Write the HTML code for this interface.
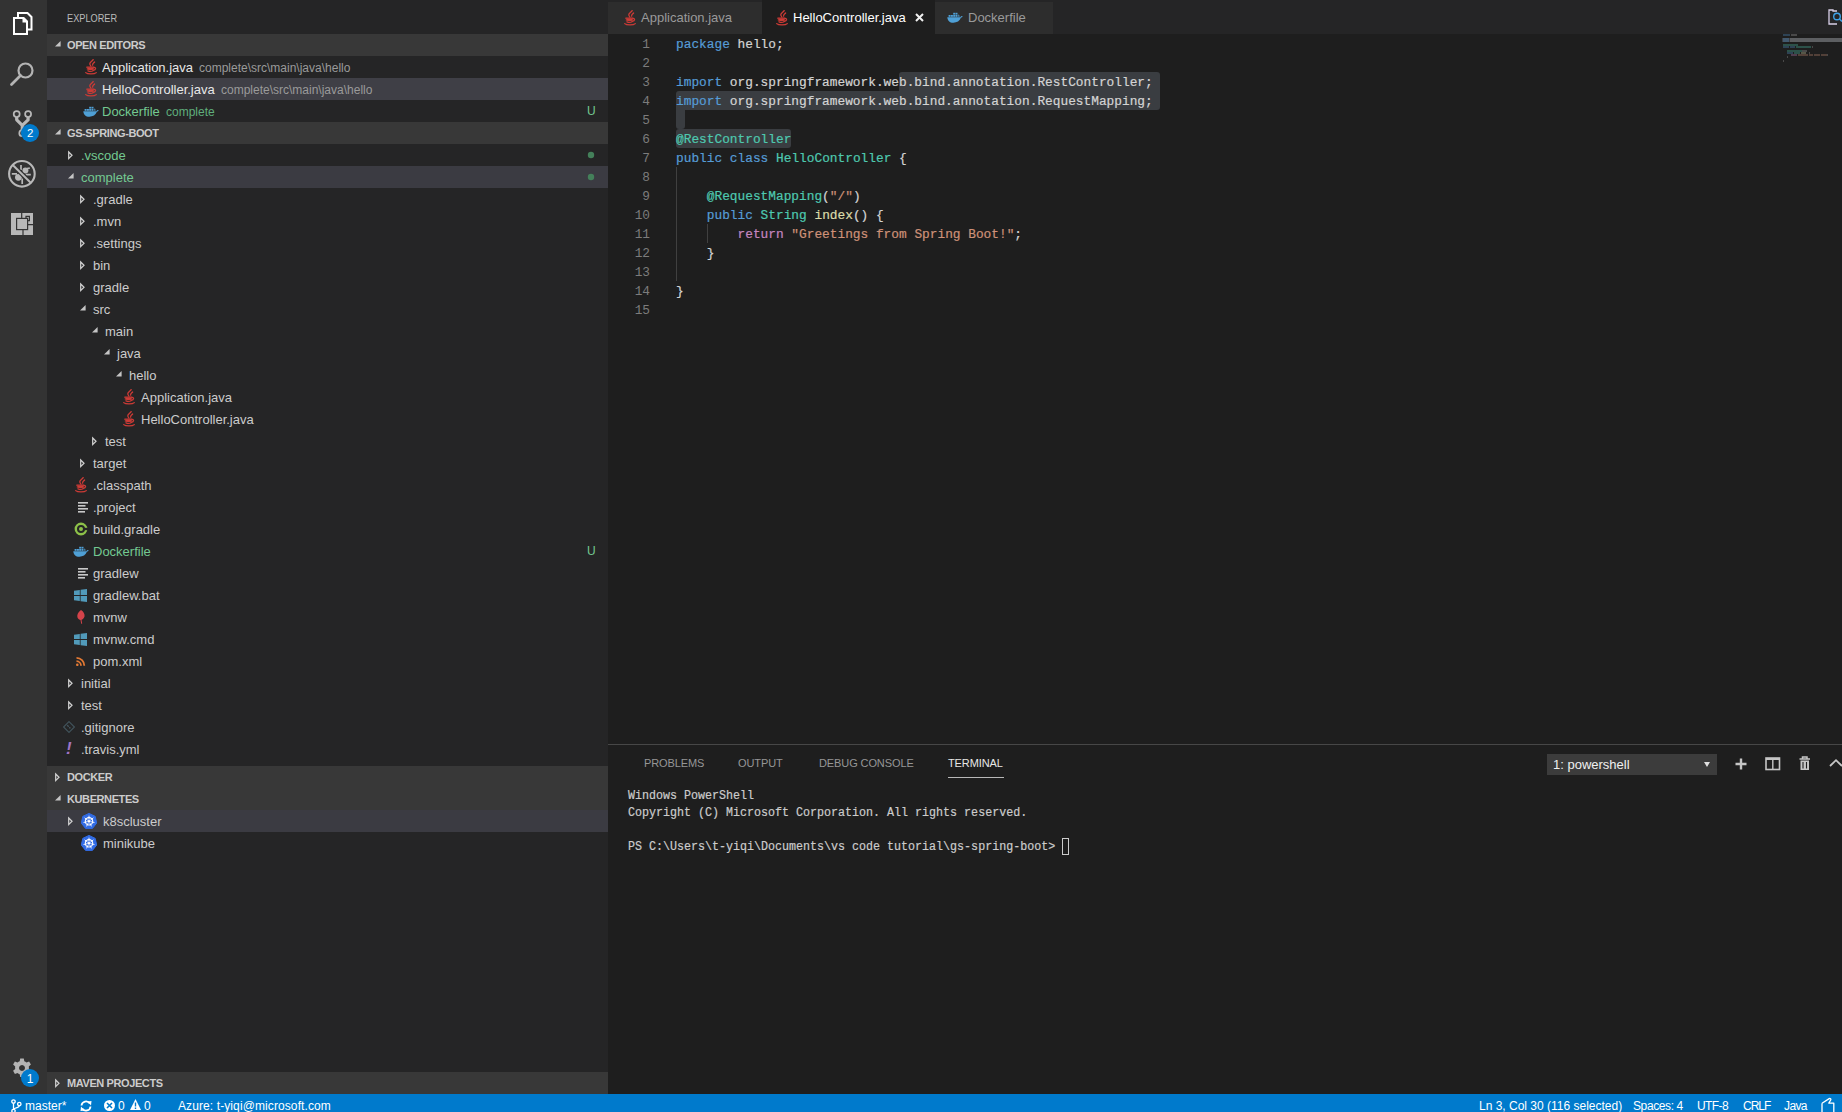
<!DOCTYPE html>
<html><head><meta charset="utf-8">
<style>
*{box-sizing:border-box;margin:0;padding:0}
html,body{width:1842px;height:1112px;overflow:hidden;background:#1e1e1e;font-family:"Liberation Sans",sans-serif;font-size:13px;color:#cccccc}
.a{position:absolute}
svg.a{overflow:visible}
#act{position:absolute;left:0;top:0;width:47px;height:1094px;background:#333333}
#side{position:absolute;left:47px;top:0;width:561px;height:1094px;background:#252526}
#tabs{position:absolute;left:608px;top:0;width:1234px;height:34px;background:#252526}
#editor{position:absolute;left:608px;top:34px;width:1234px;height:710px;background:#1e1e1e}
#panel{position:absolute;left:608px;top:744px;width:1234px;height:350px;background:#1e1e1e;border-top:1px solid #474747}
#status{position:absolute;left:0;top:1094px;width:1842px;height:22px;background:#007acc;color:#fff;font-size:12px;line-height:22px;white-space:pre}
.r{position:absolute;left:0;width:561px;height:22px;line-height:23px;white-space:pre;color:#cccccc}
.r>span{position:absolute;top:0}
.r>svg{position:absolute}
.hdr{background:#383838;font-weight:bold;font-size:11px;color:#cccccc;letter-spacing:-0.4px}
.sel{background:#3f3f46}
.hov{background:#3b3b42}
.desc{color:#9a9a9a;font-size:12px;line-height:24px}
.g{color:#73c991}
.tw{position:absolute;width:0;height:0}
.twc{position:absolute;top:7px;width:6px;height:9px}
.twe{position:absolute;top:8px;width:6px;height:6px}
.code{position:absolute;left:0;top:0;-webkit-text-stroke:0.2px currentColor;font-family:"Liberation Mono",monospace;font-size:12.825px;line-height:19px;white-space:pre;color:#d4d4d4}
.ln{position:absolute;left:0;width:42px;text-align:right;font-family:"Liberation Mono",monospace;font-size:12.8px;line-height:19px;color:#7c7c7c;white-space:pre}
.k{color:#569cd6}.t{color:#4ec9b0}.s{color:#ce9178}.f{color:#dcdcaa}.c{color:#c586c0}
.term{position:absolute;left:20px;-webkit-text-stroke:0.2px currentColor;transform:scaleX(0.93352);transform-origin:0 0;font-family:"Liberation Mono",monospace;font-size:12.5px;line-height:17px;white-space:pre;color:#cccccc}
.ptab{position:absolute;top:0;height:35px;line-height:36px;font-size:11px;color:#969696;white-space:pre;letter-spacing:-0.1px}
.tab{position:absolute;top:2px;height:32px;line-height:32px;white-space:pre;color:#9a9a9a;background:#2d2d2d}
</style></head><body>
<svg width="0" height="0" style="position:absolute">
<defs>
<symbol id="java" viewBox="0 0 12 16"><g fill="none" stroke="#cc3b36" stroke-width="1.3" stroke-linecap="round"><path d="M8.2 0.6 C7.5 2.2 4.6 3 4.8 5 C4.9 6 5.6 6.5 5.9 7.2"/><path d="M9.6 3 C8.8 4 7.2 4.6 7.6 6.2"/><path d="M1.8 8.2 H8.8"/><path d="M2.3 10 C3.5 10.5 7.5 10.5 8.5 10"/><path d="M8.9 8.4 C11.2 8.2 11.2 11 8.3 11.4"/><path d="M3 11.8 C4.5 12.5 6.8 12.5 8 11.8"/><path d="M0.7 13.6 C2.5 15.4 9.5 15.4 11.3 13.6"/></g><path d="M2.2 8.4 H8.6 L8.2 10.2 C7 11 4 11 2.7 10.2 Z" fill="#cc3b36"/></symbol>
<symbol id="docker" viewBox="0 0 16 11"><g fill="#4fa0d6"><path d="M0.3 5.2 H13.3 C13.8 4.3 14.6 3.9 15.6 4.2 C15.4 5 14.8 5.5 14 5.6 C12.8 9 9.8 10.8 6.4 10.8 C2.6 10.8 0.6 8.6 0.3 5.2 Z"/><rect x="1.6" y="3" width="2" height="1.8"/><rect x="3.9" y="3" width="2" height="1.8"/><rect x="6.2" y="3" width="2" height="1.8"/><rect x="8.5" y="3" width="2" height="1.8"/><rect x="6.2" y="0.8" width="2" height="1.8"/><rect x="8.5" y="0.8" width="2" height="1.8"/><path d="M11.3 2.5 C12.3 2.8 12.6 3.8 12.5 4.8 L11.3 4.8 Z"/></g></symbol>
<symbol id="lines" viewBox="0 0 10 11"><g fill="#c8c8c8"><rect x="0" y="0" width="10" height="1.6"/><rect x="0" y="3" width="7.5" height="1.6"/><rect x="0" y="6" width="10" height="1.6"/><rect x="0" y="9" width="7" height="1.6"/></g></symbol>
<symbol id="gradle" viewBox="0 0 14 14"><circle cx="7" cy="7" r="5.2" fill="none" stroke="#8dc149" stroke-width="2.4"/><rect x="10" y="5.8" width="4" height="2.4" fill="#252526"/><circle cx="7" cy="7" r="2" fill="#8dc149"/></symbol>
<symbol id="win" viewBox="0 0 13 13"><g fill="#519aba"><path d="M0 1.8 L5.8 0.9 V6.1 H0 Z"/><path d="M6.6 0.8 L13 0 V6.1 H6.6 Z"/><path d="M0 6.9 H5.8 V12.1 L0 11.2 Z"/><path d="M6.6 6.9 H13 V13 L6.6 12.2 Z"/></g></symbol>
<symbol id="feather" viewBox="0 0 8 14"><path d="M4 0 C6.5 1.5 8 4 7.5 6.5 C7 8.5 5.5 9.5 4.5 9.8 L5.2 13.8 L4.2 13.8 L3.5 10 C1.5 9.5 0 8 0.3 5.5 C0.6 3 2.5 1 4 0 Z" fill="#d4434a"/></symbol>
<symbol id="rss" viewBox="0 0 10 9"><g fill="none" stroke="#e37933" stroke-width="1.8"><path d="M0.5 4.2 A4.5 4.5 0 0 1 5 8.7"/><path d="M0.5 0.9 A7.8 7.8 0 0 1 8.3 8.7"/></g><circle cx="1.3" cy="7.8" r="1.3" fill="#e37933"/></symbol>
<symbol id="gitig" viewBox="0 0 14 14"><path d="M7 0.7 L13.3 7 L7 13.3 L0.7 7 Z" fill="none" stroke="#41535b" stroke-width="1.3"/><circle cx="5.5" cy="5.5" r="1" fill="#41535b"/><circle cx="8" cy="8" r="1" fill="#41535b"/><path d="M5.5 5.5 L8 8" stroke="#41535b"/></symbol>
<symbol id="k8s" viewBox="0 0 16 16"><path d="M8.00 0.40 L14.18 3.37 L15.70 10.06 L11.43 15.42 L4.57 15.42 L0.30 10.06 L1.82 3.37 Z" fill="#326ce5" stroke="#326ce5" stroke-width="1" stroke-linejoin="round"/><g fill="none" stroke="#ffffff"><circle cx="8" cy="8.3" r="3.7" stroke-width="1.1"/><path d="M8.00 6.70 L8.00 2.70 M9.25 7.30 L12.38 4.81 M9.56 8.66 L13.46 9.55 M8.69 9.74 L10.43 13.35 M7.31 9.74 L5.57 13.35 M6.44 8.66 L2.54 9.55 M6.75 7.30 L3.62 4.81 " stroke-width="0.9"/></g><circle cx="8" cy="8.3" r="1.3" fill="#fff"/></symbol>
</defs></svg>
<div id="act">
<svg class="a" style="left:0;top:0" width="47" height="250">
 <g fill="none" stroke="#ffffff" stroke-width="2">
  <path d="M14 18 H23 L27 22 V34 H14 Z"/>
  <path d="M18 17 V13 H27.5 L31.5 17 V29.5 H28"/>
 </g>
 <path d="M22.5 17 H24 L28 21 V22.5 H22.5 Z" fill="#ffffff"/>
 <g fill="none" stroke="#b4b4b4">
  <circle cx="25.5" cy="70.5" r="7" stroke-width="2.2"/>
  <path d="M20.5 75.5 L11.5 84.5" stroke-width="2.8" stroke-linecap="round"/>
 </g>
 <g fill="none" stroke="#b8b8b8">
  <circle cx="16.7" cy="114.1" r="3" stroke-width="1.7"/>
  <circle cx="28.1" cy="114.1" r="3" stroke-width="1.7"/>
  <path d="M16.7 117 V119.8 L22.3 125.3 L28.1 119.8 V117 M22.3 125 V130.5" stroke-width="3.2" stroke-linejoin="round"/>
  <circle cx="22.3" cy="133.2" r="3" stroke-width="1.7"/>
 </g>
 <circle cx="30" cy="133" r="9" fill="#007acc"/>
 <text x="30.2" y="137" text-anchor="middle" font-family="Liberation Sans" font-size="11.5" fill="#fff">2</text>
 <circle cx="21.9" cy="173.8" r="12.8" fill="none" stroke="#b8b8b8" stroke-width="2.1"/>
 <g stroke="#b8b8b8" stroke-width="1.7" fill="none">
  <path d="M21 165 V170 M25.6 174.7 H30.8 M11.8 173.8 H17 M22.2 178.5 V184 M27 168.5 L29.8 168.2"/>
 </g>
 <g fill="#b8b8b8">
  <circle cx="25.4" cy="170.6" r="3"/>
  <circle cx="18.4" cy="177.3" r="3.4"/>
 </g>
 <path d="M14.6 166.9 L29.1 181.1" stroke="#333333" stroke-width="4.4"/>
 <path d="M12.5 164.8 L31.2 183.2" stroke="#b8b8b8" stroke-width="2"/>
 <path d="M11 213 H33 V235 H11 Z" fill="#b8b8b8"/>
 <g fill="none" stroke="#333333" stroke-width="1.2">
  <rect x="16.6" y="218.4" width="11" height="11.2"/>
  <path d="M21.7 213 V218 M23 229.8 V235 M27.8 224.6 H33"/>
  <path d="M26 218.2 V216.4 H29.4 V220.6 H28"/>
 </g>
</svg>
<svg class="a" style="left:0;top:1050px" width="47" height="44">
 <g transform="translate(22 18)" fill="#b4b4b4">
  <path d="M-1.8 -9.5 h3.6 l.5 2.7 a7 7 0 0 1 2.2 1.3 l2.6 -1 1.8 3.1 -2.1 1.8 a7 7 0 0 1 0 2.6 l2.1 1.8 -1.8 3.1 -2.6 -1 a7 7 0 0 1 -2.2 1.3 l-.5 2.7 h-3.6 l-.5 -2.7 a7 7 0 0 1 -2.2 -1.3 l-2.6 1 -1.8 -3.1 2.1 -1.8 a7 7 0 0 1 0 -2.6 l-2.1 -1.8 1.8 -3.1 2.6 1 a7 7 0 0 1 2.2 -1.3 z M0 -3 a3 3 0 1 0 0.01 0 z" fill-rule="evenodd"/>
 </g>
 <circle cx="30" cy="28" r="9" fill="#007acc"/>
 <text x="30" y="32.5" text-anchor="middle" font-family="Liberation Sans" font-size="12" fill="#fff">1</text>
</svg>
</div>
<div id="side">
<div class="a" style="left:20px;top:0;height:34px;line-height:36px;font-size:11px;color:#bbbbbb;white-space:pre;transform:scaleX(0.835);transform-origin:0 0">EXPLORER</div>
<div class="r hdr" style="top:34px"><svg class="a" style="left:8px;top:7px" width="6" height="6"><path d="M5.6 0 V5.6 H0 Z" fill="#c5c5c5"/></svg><span style="left:20px">OPEN EDITORS</span></div>
<div class="r" style="top:56px"><svg class="a" style="left:38.0px;top:3.0px" width="12" height="16"><use href="#java"/></svg><span style="left:55px;color:#e8e8e8">Application.java</span><span class="desc" style="left:152px">complete\src\main\java\hello</span></div>
<div class="r sel" style="top:78px"><svg class="a" style="left:38.0px;top:3.0px" width="12" height="16"><use href="#java"/></svg><span style="left:55px;color:#e8e8e8">HelloController.java</span><span class="desc" style="left:174px">complete\src\main\java\hello</span></div>
<div class="r" style="top:100px"><svg class="a" style="left:35.5px;top:5.5px" width="16" height="11"><use href="#docker"/></svg><span class="g" style="left:55px">Dockerfile</span><span class="desc g" style="left:119px;color:#5fae7c">complete</span><span class="g" style="left:540px;font-size:12px">U</span></div>
<div class="r hdr" style="top:122px"><svg class="a" style="left:8px;top:7px" width="6" height="6"><path d="M5.6 0 V5.6 H0 Z" fill="#c5c5c5"/></svg><span style="left:20px">GS-SPRING-BOOT</span></div>
<div class="r" style="top:144px"><svg class="a" style="left:21px;top:7px" width="5" height="9"><path d="M0.7 1 L4 4.3 L0.7 7.6 Z" fill="none" stroke="#d0d0d0" stroke-width="1.25" stroke-linejoin="miter"/></svg><span class="g" style="left:34px">.vscode</span><svg class="a" style="left:540px;top:7px" width="8" height="8"><circle cx="4" cy="4" r="3.2" fill="#44805a"/></svg></div>
<div class="r hov" style="top:166px"><svg class="a" style="left:21px;top:7px" width="6" height="6"><path d="M5.6 0 V5.6 H0 Z" fill="#c5c5c5"/></svg><span class="g" style="left:34px">complete</span><svg class="a" style="left:540px;top:7px" width="8" height="8"><circle cx="4" cy="4" r="3.2" fill="#44805a"/></svg></div>
<div class="r" style="top:188px"><svg class="a" style="left:33px;top:7px" width="5" height="9"><path d="M0.7 1 L4 4.3 L0.7 7.6 Z" fill="none" stroke="#d0d0d0" stroke-width="1.25" stroke-linejoin="miter"/></svg><span style="left:46px">.gradle</span></div>
<div class="r" style="top:210px"><svg class="a" style="left:33px;top:7px" width="5" height="9"><path d="M0.7 1 L4 4.3 L0.7 7.6 Z" fill="none" stroke="#d0d0d0" stroke-width="1.25" stroke-linejoin="miter"/></svg><span style="left:46px">.mvn</span></div>
<div class="r" style="top:232px"><svg class="a" style="left:33px;top:7px" width="5" height="9"><path d="M0.7 1 L4 4.3 L0.7 7.6 Z" fill="none" stroke="#d0d0d0" stroke-width="1.25" stroke-linejoin="miter"/></svg><span style="left:46px">.settings</span></div>
<div class="r" style="top:254px"><svg class="a" style="left:33px;top:7px" width="5" height="9"><path d="M0.7 1 L4 4.3 L0.7 7.6 Z" fill="none" stroke="#d0d0d0" stroke-width="1.25" stroke-linejoin="miter"/></svg><span style="left:46px">bin</span></div>
<div class="r" style="top:276px"><svg class="a" style="left:33px;top:7px" width="5" height="9"><path d="M0.7 1 L4 4.3 L0.7 7.6 Z" fill="none" stroke="#d0d0d0" stroke-width="1.25" stroke-linejoin="miter"/></svg><span style="left:46px">gradle</span></div>
<div class="r" style="top:298px"><svg class="a" style="left:33px;top:7px" width="6" height="6"><path d="M5.6 0 V5.6 H0 Z" fill="#c5c5c5"/></svg><span style="left:46px">src</span></div>
<div class="r" style="top:320px"><svg class="a" style="left:45px;top:7px" width="6" height="6"><path d="M5.6 0 V5.6 H0 Z" fill="#c5c5c5"/></svg><span style="left:58px">main</span></div>
<div class="r" style="top:342px"><svg class="a" style="left:57px;top:7px" width="6" height="6"><path d="M5.6 0 V5.6 H0 Z" fill="#c5c5c5"/></svg><span style="left:70px">java</span></div>
<div class="r" style="top:364px"><svg class="a" style="left:69px;top:7px" width="6" height="6"><path d="M5.6 0 V5.6 H0 Z" fill="#c5c5c5"/></svg><span style="left:82px">hello</span></div>
<div class="r" style="top:386px"><svg class="a" style="left:75.5px;top:3.0px" width="12" height="16"><use href="#java"/></svg><span style="left:94px">Application.java</span></div>
<div class="r" style="top:408px"><svg class="a" style="left:75.5px;top:3.0px" width="12" height="16"><use href="#java"/></svg><span style="left:94px">HelloController.java</span></div>
<div class="r" style="top:430px"><svg class="a" style="left:45px;top:7px" width="5" height="9"><path d="M0.7 1 L4 4.3 L0.7 7.6 Z" fill="none" stroke="#d0d0d0" stroke-width="1.25" stroke-linejoin="miter"/></svg><span style="left:58px">test</span></div>
<div class="r" style="top:452px"><svg class="a" style="left:33px;top:7px" width="5" height="9"><path d="M0.7 1 L4 4.3 L0.7 7.6 Z" fill="none" stroke="#d0d0d0" stroke-width="1.25" stroke-linejoin="miter"/></svg><span style="left:46px">target</span></div>
<div class="r" style="top:474px"><svg class="a" style="left:27.5px;top:3.0px" width="12" height="16"><use href="#java"/></svg><span style="left:46px">.classpath</span></div>
<div class="r" style="top:496px"><svg class="a" style="left:31.0px;top:5.5px" width="10" height="11"><use href="#lines"/></svg><span style="left:46px">.project</span></div>
<div class="r" style="top:518px"><svg class="a" style="left:26.5px;top:4.0px" width="14" height="14"><use href="#gradle"/></svg><span style="left:46px">build.gradle</span></div>
<div class="r" style="top:540px"><svg class="a" style="left:25.5px;top:5.5px" width="16" height="11"><use href="#docker"/></svg><span class="g" style="left:46px">Dockerfile</span><span class="g" style="left:540px;font-size:12px">U</span></div>
<div class="r" style="top:562px"><svg class="a" style="left:31.0px;top:5.5px" width="10" height="11"><use href="#lines"/></svg><span style="left:46px">gradlew</span></div>
<div class="r" style="top:584px"><svg class="a" style="left:27.0px;top:4.5px" width="13" height="13"><use href="#win"/></svg><span style="left:46px">gradlew.bat</span></div>
<div class="r" style="top:606px"><svg class="a" style="left:29.5px;top:4.0px" width="8" height="14"><use href="#feather"/></svg><span style="left:46px">mvnw</span></div>
<div class="r" style="top:628px"><svg class="a" style="left:27.0px;top:4.5px" width="13" height="13"><use href="#win"/></svg><span style="left:46px">mvnw.cmd</span></div>
<div class="r" style="top:650px"><svg class="a" style="left:28.5px;top:6.5px" width="10" height="9"><use href="#rss"/></svg><span style="left:46px">pom.xml</span></div>
<div class="r" style="top:672px"><svg class="a" style="left:21px;top:7px" width="5" height="9"><path d="M0.7 1 L4 4.3 L0.7 7.6 Z" fill="none" stroke="#d0d0d0" stroke-width="1.25" stroke-linejoin="miter"/></svg><span style="left:34px">initial</span></div>
<div class="r" style="top:694px"><svg class="a" style="left:21px;top:7px" width="5" height="9"><path d="M0.7 1 L4 4.3 L0.7 7.6 Z" fill="none" stroke="#d0d0d0" stroke-width="1.25" stroke-linejoin="miter"/></svg><span style="left:34px">test</span></div>
<div class="r" style="top:716px"><svg class="a" style="left:15.5px;top:5.0px" width="12" height="12"><use href="#gitig"/></svg><span style="left:34px">.gitignore</span></div>
<div class="r" style="top:738px"><span style="left:19px;color:#a074c4;font-weight:bold;font-style:italic;font-size:17px;line-height:22px;top:0">!</span><span style="left:34px">.travis.yml</span></div>
<div class="r hdr" style="top:766px"><svg class="a" style="left:8px;top:7px" width="5" height="9"><path d="M0.7 1 L4 4.3 L0.7 7.6 Z" fill="none" stroke="#d0d0d0" stroke-width="1.25" stroke-linejoin="miter"/></svg><span style="left:20px">DOCKER</span></div>
<div class="r hdr" style="top:788px"><svg class="a" style="left:8px;top:7px" width="6" height="6"><path d="M5.6 0 V5.6 H0 Z" fill="#c5c5c5"/></svg><span style="left:20px">KUBERNETES</span></div>
<div class="r hov" style="top:810px"><svg class="a" style="left:21px;top:7px" width="5" height="9"><path d="M0.7 1 L4 4.3 L0.7 7.6 Z" fill="none" stroke="#d0d0d0" stroke-width="1.25" stroke-linejoin="miter"/></svg><svg class="a" style="left:34.0px;top:3.0px" width="16" height="16"><use href="#k8s"/></svg><span style="left:56px">k8scluster</span></div>
<div class="r" style="top:832px"><svg class="a" style="left:34.0px;top:3.0px" width="16" height="16"><use href="#k8s"/></svg><span style="left:56px">minikube</span></div>
<div class="r hdr" style="top:1072px"><svg class="a" style="left:8px;top:7px" width="5" height="9"><path d="M0.7 1 L4 4.3 L0.7 7.6 Z" fill="none" stroke="#d0d0d0" stroke-width="1.25" stroke-linejoin="miter"/></svg><span style="left:20px">MAVEN PROJECTS</span></div>
</div>
<div id="tabs">
<div class="tab" style="left:0;width:154px"><svg class="a" style="left:16px;top:8px" width="12" height="16"><use href="#java"/></svg><span class="a" style="left:33px;top:0">Application.java</span></div>
<div class="tab" style="left:154px;width:173px;top:0;height:34px;background:#1e1e1e;color:#ffffff;line-height:35px"><svg class="a" style="left:14px;top:10px" width="12" height="16"><use href="#java"/></svg><span class="a" style="left:31px;top:0">HelloController.java</span><svg class="a" style="left:153px;top:13px" width="9" height="9"><path d="M1 1 L8 8 M8 1 L1 8" stroke="#f0f0f0" stroke-width="2"/></svg></div>
<div class="tab" style="left:327px;width:118px"><svg class="a" style="left:12px;top:10px" width="16" height="11"><use href="#docker"/></svg><span class="a" style="left:33px;top:0">Dockerfile</span></div>
<svg class="a" style="left:1220px;top:9px" width="14" height="16"><path d="M9 2 H5 V1 H1 V15 H9" fill="none" stroke="#d8cfe8" stroke-width="1.3"/><circle cx="9" cy="7.5" r="3.3" fill="none" stroke="#3ea1e6" stroke-width="1.4"/><path d="M11.3 9.8 L14 12.5" stroke="#3ea1e6" stroke-width="1.6"/></svg>
</div>
<div id="editor">
<div class="a" style="left:290.70000000000005px;top:38px;width:261.29999999999995px;height:19px;background:#3a3d41;border-radius:3px 3px 0 0"></div>
<div class="a" style="left:68px;top:57px;width:484px;height:19px;background:#3a3d41;border-radius:3px 0 3px 0"></div>
<div class="a" style="left:68px;top:76px;width:8.5px;height:19px;background:#3a3d41;border-radius:0 0 3px 3px"></div>
<div class="a" style="left:68px;top:95px;width:115px;height:19px;background:#3a3d41;border-radius:3px"></div>
<div class="a" style="left:68px;top:133px;width:1px;height:114px;background:#404040"></div>
<div class="a" style="left:99px;top:190px;width:1px;height:19px;background:#404040"></div>
<div class="ln" style="top:1px">1
2
3
4
5
6
7
8
9
10
11
12
13
14
15
</div>
<div class="code" style="left:68px;top:1px"><span class="k">package</span> hello;

<span class="k">import</span> org.springframework.web.bind.annotation.RestController;
<span class="k">import</span> org.springframework.web.bind.annotation.RequestMapping;

<span class="t">@RestController</span>
<span class="k">public</span> <span class="k">class</span> <span class="t">HelloController</span> {

    <span class="t">@RequestMapping</span>(<span class="s">"/"</span>)
    <span class="k">public</span> <span class="t">String</span> <span class="f">index</span>() {
        <span class="c">return</span> <span class="s">"Greetings from Spring Boot!"</span>;
    }

}
</div>
<div class="a" style="left:1174px;top:0;width:60px;height:40px;overflow:hidden">
<div class="a" style="left:0;top:4px;width:60px;height:4px;background:#3a3d41"></div>
<div class="a" style="left:1px;top:0px;width:7px;height:2px;background:#569cd6;opacity:.3"></div>
<div class="a" style="left:9px;top:0px;width:6px;height:2px;background:#b0b0b0;opacity:.3"></div>
<div class="a" style="left:1px;top:4px;width:6px;height:2px;background:#569cd6;opacity:.3"></div>
<div class="a" style="left:8px;top:4px;width:55px;height:2px;background:#b0b0b0;opacity:.3"></div>
<div class="a" style="left:1px;top:6px;width:6px;height:2px;background:#569cd6;opacity:.3"></div>
<div class="a" style="left:8px;top:6px;width:55px;height:2px;background:#b0b0b0;opacity:.3"></div>
<div class="a" style="left:1px;top:10px;width:15px;height:2px;background:#4ec9b0;opacity:.3"></div>
<div class="a" style="left:1px;top:12px;width:6px;height:2px;background:#569cd6;opacity:.3"></div>
<div class="a" style="left:8px;top:12px;width:5px;height:2px;background:#569cd6;opacity:.3"></div>
<div class="a" style="left:14px;top:12px;width:15px;height:2px;background:#4ec9b0;opacity:.3"></div>
<div class="a" style="left:30px;top:12px;width:1px;height:2px;background:#b0b0b0;opacity:.3"></div>
<div class="a" style="left:5px;top:16px;width:15px;height:2px;background:#4ec9b0;opacity:.3"></div>
<div class="a" style="left:20px;top:16px;width:5px;height:2px;background:#b0b0b0;opacity:.3"></div>
<div class="a" style="left:5px;top:18px;width:6px;height:2px;background:#569cd6;opacity:.3"></div>
<div class="a" style="left:12px;top:18px;width:6px;height:2px;background:#4ec9b0;opacity:.3"></div>
<div class="a" style="left:19px;top:18px;width:5px;height:2px;background:#dcdcaa;opacity:.3"></div>
<div class="a" style="left:27px;top:18px;width:1px;height:2px;background:#b0b0b0;opacity:.3"></div>
<div class="a" style="left:9px;top:20px;width:6px;height:2px;background:#c586c0;opacity:.3"></div>
<div class="a" style="left:16px;top:20px;width:10px;height:2px;background:#ce9178;opacity:.3"></div>
<div class="a" style="left:27px;top:20px;width:4px;height:2px;background:#ce9178;opacity:.3"></div>
<div class="a" style="left:32px;top:20px;width:6px;height:2px;background:#ce9178;opacity:.3"></div>
<div class="a" style="left:39px;top:20px;width:6px;height:2px;background:#ce9178;opacity:.3"></div>
<div class="a" style="left:45px;top:20px;width:1px;height:2px;background:#b0b0b0;opacity:.3"></div>
<div class="a" style="left:5px;top:22px;width:1px;height:2px;background:#b0b0b0;opacity:.3"></div>
<div class="a" style="left:1px;top:26px;width:1px;height:2px;background:#b0b0b0;opacity:.3"></div>
</div>

</div>
<div id="panel">
<div class="ptab" style="left:36px;color:#969696">PROBLEMS</div>
<div class="ptab" style="left:130px;color:#969696">OUTPUT</div>
<div class="ptab" style="left:211px;color:#969696">DEBUG CONSOLE</div>
<div class="ptab" style="left:340px;color:#e7e7e7">TERMINAL</div>
<div class="a" style="left:340px;top:32px;width:56px;height:1px;background:#b8b8b8"></div>
<div class="term" style="top:43px">Windows PowerShell
Copyright (C) Microsoft Corporation. All rights reserved.

PS C:\Users\t-yiqi\Documents\vs code tutorial\gs-spring-boot> </div>
<div class="a" style="left:454px;top:93px;width:7px;height:17px;border:1px solid #cccccc"></div>
<div class="a" style="left:939px;top:9px;width:170px;height:21px;background:#3c3c3c;color:#f0f0f0;font-size:13px;line-height:22px;white-space:pre"><span class="a" style="left:6px;top:0">1: powershell</span><svg class="a" style="left:157px;top:8px" width="6" height="5"><path d="M0 0 H6 L3 5 Z" fill="#e0e0e0"/></svg></div>
<svg class="a" style="left:1127px;top:13px" width="12" height="12"><path d="M6 0.5 V11.5 M0.5 6 H11.5" stroke="#c5c5c5" stroke-width="2.4"/></svg>
<svg class="a" style="left:1157px;top:12px" width="16" height="14"><rect x="1" y="1" width="13.5" height="11.5" fill="none" stroke="#c5c5c5" stroke-width="1.6"/><path d="M7.8 1 V12.5" stroke="#c5c5c5" stroke-width="1.4"/><path d="M1 2 H14.5" stroke="#c5c5c5" stroke-width="2"/></svg>
<svg class="a" style="left:1191px;top:11px" width="12" height="15"><path d="M0.5 3 H11 M3.5 3 V1 H8 V3" fill="none" stroke="#c5c5c5" stroke-width="1.5"/><path d="M1.5 4.5 H10 V14 H1.5 Z" fill="#c5c5c5"/><path d="M4 6 V12.5 M7.5 6 V12.5" stroke="#1e1e1e" stroke-width="1.1"/></svg>
<svg class="a" style="left:1221px;top:14px" width="14" height="8"><path d="M1 7 L7 1.2 L13 7" fill="none" stroke="#c5c5c5" stroke-width="1.8"/></svg>
</div>
<div id="status"><svg class="a" style="left:11px;top:5px" width="11" height="14"><g fill="none" stroke="#fff" stroke-width="1.3"><circle cx="2.5" cy="2.5" r="1.7"/><circle cx="8.3" cy="5" r="1.7"/><circle cx="2.5" cy="12" r="1.7"/><path d="M2.5 4.2 V10.3 M8.3 6.7 C8.3 9 3 8.5 2.5 10.3"/></g></svg><span class="a" style="left:25px;top:1px">master*</span><svg class="a" style="left:80px;top:6px" width="12" height="12"><g fill="none" stroke="#fff" stroke-width="1.8"><path d="M1.5 5.5 A4.5 4.5 0 0 1 9.8 3.5"/><path d="M10.5 6.5 A4.5 4.5 0 0 1 2.2 8.5"/></g><path d="M7.5 1.5 L11.5 1 L11 5.5 Z M4.5 10.5 L0.5 11 L1 6.5 Z" fill="#fff"/></svg><svg class="a" style="left:104px;top:6px" width="11" height="11"><circle cx="5.5" cy="5.5" r="5.5" fill="#fff"/><path d="M3 3 L8 8 M8 3 L3 8" stroke="#007acc" stroke-width="1.6"/></svg><span class="a" style="left:118px;top:1px">0</span><svg class="a" style="left:130px;top:5px" width="11" height="11"><path d="M5.5 0 L11 11 H0 Z" fill="#fff"/><path d="M5.5 3.5 V7.5 M5.5 8.5 V10" stroke="#007acc" stroke-width="1.4"/></svg><span class="a" style="left:144px;top:1px">0</span><span class="a" style="left:178px;top:1px;letter-spacing:0.1px">Azure: t-yiqi@microsoft.com</span><span class="a" style="left:1479px;top:1px;letter-spacing:0px">Ln 3, Col 30 (116 selected)</span><span class="a" style="left:1633px;top:1px;letter-spacing:-0.4px">Spaces: 4</span><span class="a" style="left:1697px;top:1px;letter-spacing:-0.6px">UTF-8</span><span class="a" style="left:1743px;top:1px;letter-spacing:-1px">CRLF</span><span class="a" style="left:1784px;top:1px;letter-spacing:-0.6px">Java</span><svg class="a" style="left:1821px;top:3px" width="21" height="19"><path d="M1 6.2 L8.2 1.6 C9.2 1 10.4 1.9 9.7 3 L7.8 6.2 H12.8 V19 M1 6.2 V19" fill="none" stroke="#fff" stroke-width="1.3" stroke-linejoin="round"/></svg></div>
</body></html>
